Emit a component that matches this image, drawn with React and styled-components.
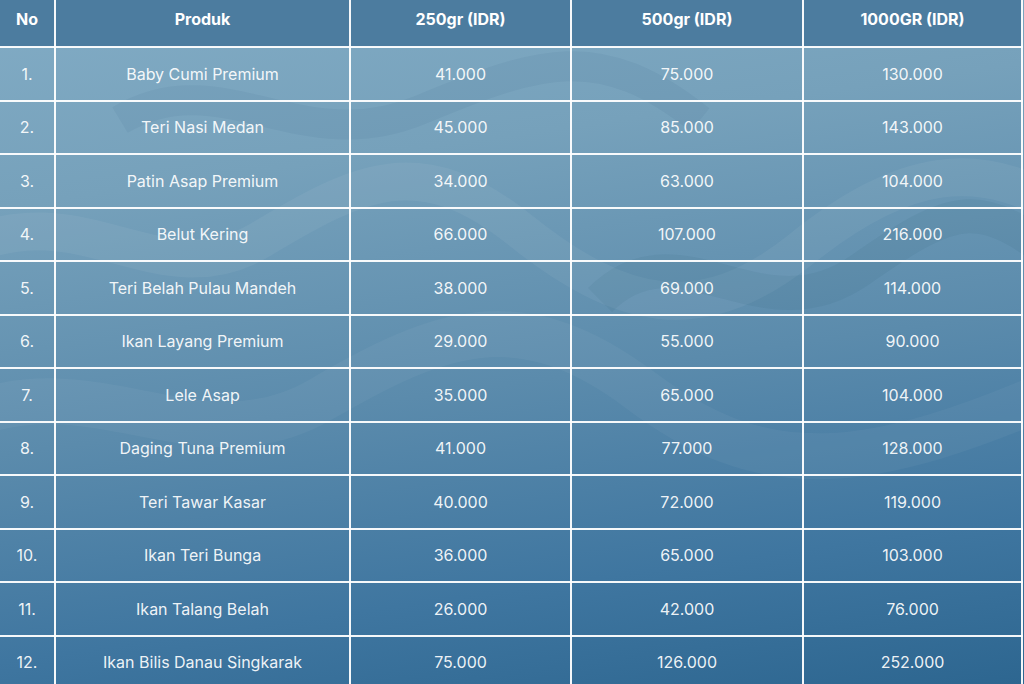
import React from 'react';
import styled, { createGlobalStyle } from 'styled-components';

const products = [
    ['Baby Cumi Premium', '41.000', '75.000', '130.000'],
    ['Teri Nasi Medan', '45.000', '85.000', '143.000'],
    ['Patin Asap Premium', '34.000', '63.000', '104.000'],
    ['Belut Kering', '66.000', '107.000', '216.000'],
    ['Teri Belah Pulau Mandeh', '38.000', '69.000', '114.000'],
    ['Ikan Layang Premium', '29.000', '55.000', '90.000'],
    ['Lele Asap', '35.000', '65.000', '104.000'],
    ['Daging Tuna Premium', '41.000', '77.000', '128.000'],
    ['Teri Tawar Kasar', '40.000', '72.000', '119.000'],
    ['Ikan Teri Bunga', '36.000', '65.000', '103.000'],
    ['Ikan Talang Belah', '26.000', '42.000', '76.000'],
    ['Ikan Bilis Danau Singkarak', '75.000', '126.000', '252.000'],
];

export default function App() {
    return (
        <>
            <GlobalStyle />
            <Page>
                <Waves viewBox="0 0 1024 684" preserveAspectRatio="none">
                    <path d="M-40 250 C 80 190, 160 300, 260 240 S 420 150, 520 230 S 700 330, 800 250 S 980 150, 1080 220"
                        stroke="rgba(255,255,255,0.05)" strokeWidth="38" fill="none" />
                    <path d="M-40 420 C 90 360, 200 470, 320 400 S 520 300, 640 390 S 860 480, 1080 380"
                        stroke="rgba(255,255,255,0.04)" strokeWidth="46" fill="none" />
                    <path d="M120 120 C 220 60, 300 160, 420 110 S 600 40, 700 120"
                        stroke="rgba(20,60,90,0.05)" strokeWidth="30" fill="none" />
                    <path d="M600 300 C 680 220, 760 340, 860 270 S 980 200, 1060 260"
                        stroke="rgba(20,60,90,0.06)" strokeWidth="34" fill="none" />
                </Waves>
                <PriceTable>
                    <colgroup>
                        <col style={{ width: 55 }} />
                        <col style={{ width: 295 }} />
                        <col style={{ width: 221 }} />
                        <col style={{ width: 232 }} />
                        <col style={{ width: 219 }} />
                    </colgroup>
                    <thead>
                        <tr>
                            <HeadCell>No</HeadCell>
                            <HeadCell>Produk</HeadCell>
                            <HeadCell>250gr (IDR)</HeadCell>
                            <HeadCell>500gr (IDR)</HeadCell>
                            <HeadCell>1000GR (IDR)</HeadCell>
                        </tr>
                    </thead>
                    <tbody>
                        {products.map((p, i) => (
                            <tr key={p[0]}>
                                <Cell>{i + 1}.</Cell>
                                <Cell>{p[0]}</Cell>
                                <Cell>{p[1]}</Cell>
                                <Cell>{p[2]}</Cell>
                                <Cell>{p[3]}</Cell>
                            </tr>
                        ))}
                    </tbody>
                </PriceTable>
            </Page>
        </>
    );
}

const GlobalStyle = createGlobalStyle`
    html, body {
        margin: 0;
        padding: 0;
        overflow: hidden;
    }
    body {
        font-family: Inter, "Noto Sans", sans-serif;
    }
`;

const Page = styled.div`
    position: relative;
    width: 1024px;
    height: 684px;
    overflow: hidden;
    background: linear-gradient(172deg, #82acc5 0%, #76a1bb 25%, #5b8bac 55%, #3f76a0 80%, #2d6690 100%);
`;

const Waves = styled.svg`
    position: absolute;
    inset: 0;
    width: 100%;
    height: 100%;
`;

const PriceTable = styled.table`
    position: relative;
    width: 1022px;
    table-layout: fixed;
    border-collapse: collapse;
    color: rgba(255, 255, 255, 0.93);
    font-size: 16px;
    text-align: center;

    tr > *:first-child {
        border-left: none;
    }
    thead tr > * {
        border-top: none;
    }
`;

const HeadCell = styled.th`
    height: 47px;
    box-sizing: border-box;
    padding: 0 8px 8px;
    background: #4c7c9f;
    color: #ffffff;
    font-size: 16px;
    font-weight: 700;
    border: 2px solid rgba(255, 255, 255, 0.95);
`;

const Cell = styled.td`
    height: 53.5px;
    box-sizing: border-box;
    padding: 0 8px;
    font-weight: 400;
    border: 2px solid rgba(255, 255, 255, 0.95);
`;
